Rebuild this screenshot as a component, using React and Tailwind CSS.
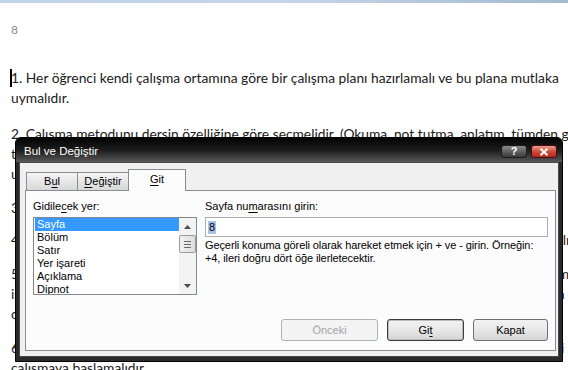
import React from 'react';

const docFont = { fontFamily: 'Lato, "Open Sans", sans-serif' };
const uiFont = { fontFamily: '"Liberation Sans", Arial, sans-serif' };

const paragraphs = [
  {
    mt: 'mt-0',
    lines: [
      '1. Her öğrenci kendi çalışma ortamına göre bir çalışma planı hazırlamalı ve bu plana mutlaka',
      'uymalıdır.',
    ],
  },
  {
    mt: 'mt-[16px]',
    lines: [
      '2. Çalışma metodunu dersin özelliğine göre seçmelidir. (Okuma, not tutma, anlatım, tümden gelim',
      'tümevarım, problem çözme gibi yöntemler derse göre değişmelidir.) Ders çalışırken ayrıca',
      'uygun araç ve gereçler kullanılmalıdır.',
    ],
  },
  {
    mt: 'mt-[14px]',
    lines: ['3. Çalışma sırasında dikkati dağıtan her şey ortamdan uzaklaştırılmalıdır.'],
  },
  {
    mt: 'mt-[12px]',
    lines: ['4. Ders çalışmaya başlamadan önce gerekli tüm malzemeler hazır bulundurulmalı ve işe koyulmalıdır.'],
  },
  {
    mt: 'mt-[14px]',
    lines: [
      '5. Her gün düzenli olarak belirli bir saatte ders çalışılmalı, çalışma sırasında kısa molalar verilmeli ve',
      'işlenen konular aynı gün tekrar edilmelidir. Tekrar yapılmayan bilgiler kısa sürede unutulmaya mahkûmdur,',
      'olduğu için tekrar çok önemlidir.',
    ],
  },
  {
    mt: 'mt-[14px]',
    lines: [
      '6. Öğrenci ders çalışırken kendisine küçük hedefler koymalı, bu hedeflere ulaştığında kendini ödüllendirip yeniden-',
      'çalışmaya başlamalıdır.',
    ],
  },
];

const items = ['Sayfa', 'Bölüm', 'Satır', 'Yer işareti', 'Açıklama', 'Dipnot'];

function U({ children }) {
  return <span className="underline underline-offset-[2px] decoration-1">{children}</span>;
}

function TabButton({ children, active }) {
  if (active) {
    return (
      <div className="relative z-10 -ml-px -mb-px flex h-[22px] w-[58px] items-center justify-center border border-b-0 border-[#898c95] bg-[#fcfcfc] pb-[2px]">
        {children}
      </div>
    );
  }
  return (
    <div className="-ml-px flex h-[18px] w-[52px] items-center justify-center border border-b-0 border-[#898c95] bg-gradient-to-b from-[#f5f5f5] to-[#d8d8d8] first:ml-0">
      {children}
    </div>
  );
}

export default function App() {
  return (
    <div className="relative h-[370px] w-[568px] overflow-hidden bg-white">
      {/* ribbon edge */}
      <div className="h-[3px] bg-gradient-to-r from-[#bfd3ea] via-[#c6d6ea] to-[#a3bad1]" />

      {/* document */}
      <div className="pl-[11px] text-[13.8px] leading-[20px] text-[#1a1a1a]" style={docFont}>
        <div className="pt-[17px] text-[12px] text-[#8a8a8a]">8</div>
        <div className="mt-[28px]">
          {paragraphs.map((p, i) => (
            <div key={i} className={p.mt}>
              {p.lines.map((l, j) => (
                <div key={j} className="relative whitespace-nowrap">
                  {i === 0 && j === 0 && (
                    <span className="absolute left-[-1px] top-[1px] h-[18px] w-[2px] bg-black" />
                  )}
                  {l}
                </div>
              ))}
            </div>
          ))}
        </div>
      </div>

      {/* Bul ve Değiştir dialog */}
      <div
        className="absolute left-[15px] top-[137px] flex h-[225px] w-[548px] flex-col rounded-t-[6px] border border-black bg-[#2a2a2a] text-[11px] text-black"
        style={uiFont}
      >
        <div className="flex h-[24px] shrink-0 items-start justify-between rounded-t-[5px] bg-gradient-to-b from-[#050505] via-[#1c1c1c] to-[#5a5a5a]">
          <span className="pl-[8px] pt-[5px] text-[11.5px] text-white">Bul ve Değiştir</span>
          <div className="mr-[5px] mt-[7px] flex gap-[4px]">
            <div className="flex h-[13px] w-[26px] items-center justify-center rounded-[3px] border border-[#1a1a1a] bg-gradient-to-b from-[#8a8a8a] to-[#3a3a3a] text-[11px] font-bold leading-none text-white">
              ?
            </div>
            <div className="flex h-[13px] w-[26px] items-center justify-center rounded-[3px] border border-[#4a1010] bg-gradient-to-b from-[#e99a8a] via-[#cf4a3a] to-[#b8281c]">
              <svg width="10" height="8" viewBox="0 0 10 8">
                <path d="M1.5 0.8 L8.5 7.2 M8.5 0.8 L1.5 7.2" stroke="white" strokeWidth="2" />
              </svg>
            </div>
          </div>
        </div>

        <div className="mx-[3px] mb-[4px] flex flex-1 flex-col border border-[#4a4a4a] bg-[#f0f0f0] pt-[6px]">
          {/* tabs */}
          <div className="flex h-[21px] items-end pl-[6px]">
            <TabButton>
              B<U>u</U>l
            </TabButton>
            <TabButton>
              <U>D</U>eğiştir
            </TabButton>
            <TabButton active>
              <U>G</U>it
            </TabButton>
          </div>

          {/* panel */}
          <div className="ml-[5px] mr-[2px] mb-[5px] flex flex-1 flex-col border border-[#898c95] bg-[#fcfcfc] px-[7px] pb-[9px] pt-[9px]">
            <div className="flex gap-[8px]">
              <div className="w-[164px]">
                <div className="h-[17px] leading-[13px]">
                  Gidile<U>c</U>ek yer:
                </div>
                <div className="flex h-[78px] border border-[#828790] bg-white">
                  <div className="flex-1 overflow-hidden pl-px">
                    {items.map((it, i) => (
                      <div
                        key={it}
                        className={
                          'h-[13px] pl-[2px] text-[11px] leading-[13px] ' +
                          (i === 0 ? 'bg-[#3399ff] text-white' : '')
                        }
                      >
                        {it}
                      </div>
                    ))}
                  </div>
                  <div className="flex w-[17px] flex-col bg-[#f3f3f3]">
                    <div className="flex h-[17px] items-center justify-center">
                      <svg width="7" height="4" viewBox="0 0 7 4">
                        <path d="M0 4 L3.5 0 L7 4 Z" fill="#4d4d4d" />
                      </svg>
                    </div>
                    <div className="flex h-[18px] flex-col items-center justify-center gap-[2px] rounded-[2px] border border-[#9a9a9a] bg-gradient-to-r from-[#f2f2f2] to-[#dcdcdc]">
                      <div className="h-px w-[7px] bg-[#6a6a6a]" />
                      <div className="h-px w-[7px] bg-[#6a6a6a]" />
                      <div className="h-px w-[7px] bg-[#6a6a6a]" />
                    </div>
                    <div className="flex-1" />
                    <div className="flex h-[17px] items-center justify-center">
                      <svg width="7" height="4" viewBox="0 0 7 4">
                        <path d="M0 0 L3.5 4 L7 0 Z" fill="#4d4d4d" />
                      </svg>
                    </div>
                  </div>
                </div>
              </div>

              <div className="flex-1">
                <div className="h-[17px] leading-[13px]">
                  Sayfa nu<U>m</U>arasını girin:
                </div>
                <div className="flex h-[20px] items-center border border-[#abadb3] bg-white pl-[2px]">
                  <span className="bg-[#a8c4e8] px-px leading-[13px]">8</span>
                </div>
                <div className="mt-[2px] leading-[13px] tracking-[-0.1px]">
                  Geçerli konuma göreli olarak hareket etmek için + ve - girin. Örneğin:
                  <br />
                  +4, ileri doğru dört öğe ilerletecektir.
                </div>
              </div>
            </div>

            <div className="mt-auto flex justify-end gap-[9px]">
              <div className="flex h-[22px] w-[97px] items-center justify-center rounded-[3px] border border-[#adb2b5] bg-[#f4f4f4] text-[#a3a3a3]">
                Önceki
              </div>
              <div className="flex h-[22px] w-[77px] items-center justify-center rounded-[3px] border border-[#3c3c3c] bg-gradient-to-b from-[#f2f2f2] via-[#e8e8e8] to-[#d4d4d4] shadow-[inset_0_0_0_1px_#bcbcbc]">
                Gi<U>t</U>
              </div>
              <div className="flex h-[22px] w-[75px] items-center justify-center rounded-[3px] border border-[#707070] bg-gradient-to-b from-[#f2f2f2] via-[#e8e8e8] to-[#d4d4d4]">
                Kapat
              </div>
            </div>
          </div>
        </div>
      </div>
    </div>
  );
}
